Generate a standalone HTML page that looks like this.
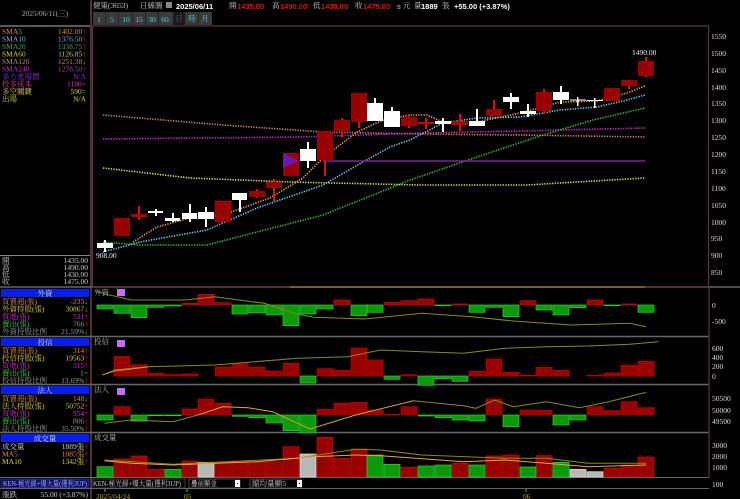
<!DOCTYPE html>
<html><head><meta charset="utf-8"><style>
body{margin:0;background:#000;width:740px;height:499px;overflow:hidden}
svg{display:block}
text{font-family:"Liberation Serif","Noto Serif CJK SC","Noto Sans CJK TC",serif;font-size:7.5px}
.s{font-family:"Liberation Sans","Noto Sans CJK TC",sans-serif}
</style></head><body>
<svg width="740" height="499" viewBox="0 0 740 499" xmlns="http://www.w3.org/2000/svg">
<rect width="740" height="499" fill="#000"/>
<rect x="90" y="0" width="2" height="499" fill="#4a3038"/>
<line x1="0" y1="26" x2="90" y2="26" stroke="#777" stroke-width="1.5"/>
<line x1="0" y1="255.5" x2="90" y2="255.5" stroke="#888"/>
<line x1="0" y1="287" x2="740" y2="287" stroke="#666" stroke-width="1.5"/>
<line x1="0" y1="336.5" x2="709" y2="336.5" stroke="#666" stroke-width="1.5"/>
<line x1="0" y1="384.5" x2="709" y2="384.5" stroke="#666" stroke-width="1.5"/>
<line x1="0" y1="432.5" x2="709" y2="432.5" stroke="#666" stroke-width="1.5"/>
<line x1="0" y1="477.5" x2="709" y2="477.5" stroke="#666" stroke-width="1"/>
<line x1="0" y1="488.5" x2="709" y2="488.5" stroke="#666" stroke-width="1"/>
<text x="45" y="16" fill="#aaa" text-anchor="middle">2025/06/11(三)</text>
<g text-anchor="start">
<text x="2" y="34" fill="#e08a3a">SMA5</text><text x="86" y="34" fill="#e08a3a" text-anchor="end">1402.00<tspan fill="#f22">↑</tspan></text>
<text x="2" y="41.5" fill="#6fb8e0">SMA10</text><text x="86" y="41.5" fill="#6fb8e0" text-anchor="end">1376.50<tspan fill="#f22">↑</tspan></text>
<text x="2" y="49" fill="#3aa83a">SMA20</text><text x="86" y="49" fill="#3aa83a" text-anchor="end">1338.75<tspan fill="#f22">↑</tspan></text>
<text x="2" y="56.5" fill="#d8d030">SMA60</text><text x="86" y="56.5" fill="#d8d030" text-anchor="end">1126.85<tspan fill="#f22">↑</tspan></text>
<text x="2" y="64" fill="#c08a60">SMA120</text><text x="86" y="64" fill="#c08a60" text-anchor="end">1251.38<tspan fill="#2d2">↓</tspan></text>
<text x="2" y="71.5" fill="#c030c0">SMA240</text><text x="86" y="71.5" fill="#c030c0" text-anchor="end">1278.50<tspan fill="#f22">↑</tspan></text>
<text x="2" y="79" fill="#8030d0">多方進場價</text><text x="86" y="79" fill="#8030d0" text-anchor="end">N/A</text>
<text x="2" y="86.5" fill="#d040a0">投多成本</text><text x="86" y="86.5" fill="#d040a0" text-anchor="end">1180=</text>
<text x="2" y="94" fill="#d8d030">多空關鍵</text><text x="86" y="94" fill="#d8d030" text-anchor="end">590=</text>
<text x="2" y="101.5" fill="#d8d030">出場</text><text x="86" y="101.5" fill="#d8d030" text-anchor="end">N/A</text>
</g>
<g fill="#ccc">
<text x="2" y="263">開</text><text x="88" y="263" text-anchor="end">1435.00</text>
<text x="2" y="270">高</text><text x="88" y="270" text-anchor="end">1490.00</text>
<text x="2" y="277">低</text><text x="88" y="277" text-anchor="end">1430.00</text>
<text x="2" y="284">收</text><text x="88" y="284" text-anchor="end">1475.00</text>
</g>
<g>
<rect x="1" y="289" width="88" height="8" fill="#0a1ee8"/><text x="45" y="296" fill="#ddd" text-anchor="middle">外資</text>
<rect x="1" y="338" width="88" height="8" fill="#0a1ee8"/><text x="45" y="345" fill="#ddd" text-anchor="middle">投信</text>
<rect x="1" y="386" width="88" height="8" fill="#0a1ee8"/><text x="45" y="393" fill="#ddd" text-anchor="middle">法人</text>
<rect x="1" y="434" width="88" height="8" fill="#0a1ee8"/><text x="45" y="441" fill="#ddd" text-anchor="middle">成交量</text>
</g>
<g>
<text x="2" y="304" fill="#e08a3a">買賣超(張)</text><text x="88" y="304" fill="#e08a3a" text-anchor="end">-235<tspan fill="#2d2">↓</tspan></text>
<text x="2" y="311.5" fill="#d8d030">外資持股(張)</text><text x="88" y="311.5" fill="#d8d030" text-anchor="end">30867<tspan fill="#2d2">↓</tspan></text>
<text x="2" y="319" fill="#d030d0">買進(張)</text><text x="88" y="319" fill="#d030d0" text-anchor="end">531<tspan fill="#f22">↑</tspan></text>
<text x="2" y="326.5" fill="#3ad03a">賣出(張)</text><text x="88" y="326.5" fill="#3ad03a" text-anchor="end">766<tspan fill="#f22">↑</tspan></text>
<text x="2" y="334" fill="#999">外資持股比例</text><text x="88" y="334" fill="#999" text-anchor="end">21.59%<tspan fill="#2d2">↓</tspan></text>
<text x="2" y="353" fill="#e08a3a">買賣超(張)</text><text x="88" y="353" fill="#e08a3a" text-anchor="end">314<tspan fill="#f22">↑</tspan></text>
<text x="2" y="360.5" fill="#d8d030">投信持股(張)</text><text x="88" y="360.5" fill="#d8d030" text-anchor="end">19563<tspan fill="#f22">↑</tspan></text>
<text x="2" y="368" fill="#d030d0">買進(張)</text><text x="88" y="368" fill="#d030d0" text-anchor="end">315<tspan fill="#f22">↑</tspan></text>
<text x="2" y="375.5" fill="#3ad03a">賣出(張)</text><text x="88" y="375.5" fill="#3ad03a" text-anchor="end">1=</text>
<text x="2" y="383" fill="#999">投信持股比例</text><text x="88" y="383" fill="#999" text-anchor="end">13.69%<tspan fill="#f22">↑</tspan></text>
<text x="2" y="401" fill="#e08a3a">買賣超(張)</text><text x="88" y="401" fill="#e08a3a" text-anchor="end">148<tspan fill="#2d2">↓</tspan></text>
<text x="2" y="408.5" fill="#d8d030">法人持股(張)</text><text x="88" y="408.5" fill="#d8d030" text-anchor="end">50752<tspan fill="#f22">↑</tspan></text>
<text x="2" y="416" fill="#d030d0">買進(張)</text><text x="88" y="416" fill="#d030d0" text-anchor="end">954<tspan fill="#f22">↑</tspan></text>
<text x="2" y="423.5" fill="#3ad03a">賣出(張)</text><text x="88" y="423.5" fill="#3ad03a" text-anchor="end">806<tspan fill="#f22">↑</tspan></text>
<text x="2" y="431" fill="#999">法人持股比例</text><text x="88" y="431" fill="#999" text-anchor="end">35.50%<tspan fill="#f22">↑</tspan></text>
<text x="2" y="449" fill="#ccc">成交量</text><text x="88" y="449" fill="#ccc" text-anchor="end">1889張<tspan fill="#f22">↑</tspan></text>
<text x="2" y="456.5" fill="#e08a3a">MA5</text><text x="88" y="456.5" fill="#e08a3a" text-anchor="end">1085張<tspan fill="#f22">↑</tspan></text>
<text x="2" y="464" fill="#d8d030">MA10</text><text x="88" y="464" fill="#d8d030" text-anchor="end">1342張<tspan fill="#f22">↑</tspan></text>
</g>
<rect x="1" y="479" width="88" height="8.5" fill="#101060" stroke="#3344cc" stroke-width="0.6"/>
<text x="3" y="486" fill="#9ab0ff" font-size="7" textLength="84" lengthAdjust="spacingAndGlyphs">KEN-極光線+爆大量(獲利3UP)</text>
<text x="2" y="497" fill="#ccc">漲跌</text><text x="88" y="497" fill="#ccc" text-anchor="end">55.00 (+3.87%)</text>

<text x="93" y="8" fill="#ccc">健策(3653)</text>
<text x="140" y="8" fill="#ccc">日線圖</text>
<rect x="166" y="2" width="6" height="6" fill="#888"/>
<text x="176" y="9" fill="#fff" font-weight="bold" font-size="9" class="s">2025/06/11</text>
<text x="229" y="8" fill="#ccc">開</text><text x="237" y="9" fill="#e01010" font-weight="bold" class="s" font-size="8">1435.00</text>
<text x="272" y="8" fill="#ccc">高</text><text x="280" y="9" fill="#e01010" font-weight="bold" class="s" font-size="8">1490.00</text>
<text x="313" y="8" fill="#ccc">低</text><text x="321" y="9" fill="#e01010" font-weight="bold" class="s" font-size="8">1430.00</text>
<text x="355" y="8" fill="#ccc">收</text><text x="363" y="9" fill="#e01010" font-weight="bold" class="s" font-size="8">1475.00</text>
<text x="397" y="9" fill="#ccc" class="s" font-size="8">s</text><text x="403" y="8" fill="#ccc">元</text>
<text x="414" y="8" fill="#ccc">量</text><text x="421" y="9" fill="#fff" font-weight="bold" class="s" font-size="8">1889</text><text x="442" y="8" fill="#ccc">張</text>
<text x="454" y="9" fill="#fff" font-weight="bold" class="s" font-size="8">+55.00 (+3.87%)</text>
<g font-size="8">
<rect x="93" y="12" width="119" height="13" fill="#3a3a3a"/>
<text x="99" y="22" fill="#4fd0e0" text-anchor="middle">1</text>
<text x="112" y="22" fill="#4fd0e0" text-anchor="middle">5</text>
<text x="126" y="22" fill="#4fd0e0" text-anchor="middle">10</text>
<text x="139" y="22" fill="#4fd0e0" text-anchor="middle">15</text>
<text x="152" y="22" fill="#4fd0e0" text-anchor="middle">30</text>
<text x="165" y="22" fill="#4fd0e0" text-anchor="middle">60</text>
<rect x="173" y="12" width="12" height="13" fill="#1a1a1a"/>
<text x="179" y="21" fill="#666" text-anchor="middle" font-size="6">日</text>
<text x="192" y="21" fill="#4fd0e0" text-anchor="middle" font-size="6">時</text>
<text x="205" y="21" fill="#4fd0e0" text-anchor="middle" font-size="6">月</text>
<g stroke="#222" stroke-width="0.8"><line x1="105.5" y1="12" x2="105.5" y2="25"/><line x1="118.5" y1="12" x2="118.5" y2="25"/><line x1="132.5" y1="12" x2="132.5" y2="25"/><line x1="145.5" y1="12" x2="145.5" y2="25"/><line x1="158.5" y1="12" x2="158.5" y2="25"/><line x1="198.5" y1="12" x2="198.5" y2="25"/></g>
</g>
<rect x="92.5" y="26" width="616" height="261" fill="none" stroke="#5a3545" stroke-width="1.2"/>
<line x1="709" y1="287" x2="709" y2="478" stroke="#5a3545" stroke-width="1.2"/>
<g fill="#ddd" font-size="7.5">
<text x="711" y="39">1550</text><text x="711" y="56">1500</text><text x="711" y="73">1450</text><text x="711" y="90">1400</text><text x="711" y="106">1350</text><text x="711" y="123">1300</text><text x="711" y="140">1250</text><text x="711" y="157">1200</text><text x="711" y="174">1150</text><text x="711" y="191">1100</text><text x="711" y="208">1050</text><text x="711" y="225">1000</text><text x="711" y="241">950</text><text x="711" y="258">900</text><text x="711" y="275">850</text>
</g>
<g fill="none" stroke-width="1.6" stroke-dasharray="1.3 1.3">
<polyline stroke="#c08a60" points="103,115 223,125 323,132 420,134 520,135 645,137"/>
<polyline stroke="#d020d0" points="103,139 300,137 420,133 520,131 645,128"/>
<polyline stroke="#e0e020" points="103,168 190,178 290,182 420,185 527,185 577,182 645,178"/>
<polyline stroke="#30c030" points="103,242 140,245 207,245 257,232 323,215 373,195 410,180 477,157 543,135 593,120 645,108"/>
<polyline stroke="#70c8f0" points="103,252 140,242 207,230 257,208 323,185 363,162 390,147 410,140 443,123 477,118 520,117 560,110 597,107 627,100 645,95"/>
<polyline stroke="#f0a040" points="133,242 157,227 190,218 223,215 270,198 303,178 323,158 357,132 383,120 410,115 427,115 443,122 477,122 520,113 543,107 560,102 597,101 627,93 645,86"/>
</g>
<line x1="323" y1="161" x2="645" y2="161" stroke="#8020a0" stroke-width="1.5"/>
<line x1="290" y1="287" x2="645" y2="287" stroke="#8a6a30" stroke-width="1.5"/>
<g>
<g fill="#fff"><rect x="104" y="240" width="2" height="12"/><rect x="97" y="243" width="16" height="5"/></g>
<rect x="114" y="218" width="16" height="18" fill="#990000"/>
<rect x="138" y="206" width="2" height="14" fill="#e01010"/><rect x="131" y="214" width="16" height="3" fill="#aa0000"/>
<g fill="#fff">
<rect x="155" y="209" width="2" height="7"/><rect x="148" y="211" width="15" height="2"/>
<rect x="172" y="213" width="2" height="9"/><rect x="165" y="218" width="15" height="3"/>
<rect x="189" y="204" width="2" height="18"/><rect x="182" y="213" width="15" height="6"/>
<rect x="205" y="207" width="2" height="20"/><rect x="198" y="212" width="16" height="7"/>
</g>
<rect x="215" y="201" width="16" height="21" fill="#990000" stroke="#c00000" stroke-width="0.5"/>
<g fill="#fff"><rect x="239" y="193" width="2" height="19"/><rect x="232" y="193" width="15" height="7"/></g>
<rect x="256" y="189" width="2" height="9" fill="#e01010"/><rect x="249" y="191" width="16" height="6" fill="#990000"/>
<rect x="273" y="179" width="2" height="22" fill="#e01010"/><rect x="266" y="182" width="16" height="6" fill="#990000"/>
<rect x="283" y="153" width="16" height="23" fill="#990000"/>
<polygon points="283,153 283,168 299,161" fill="#6a18b0"/>
<g fill="#fff"><rect x="307" y="142" width="2" height="26"/><rect x="300" y="149" width="16" height="12"/></g>
<rect x="324" y="131" width="2" height="45" fill="#e01010"/><rect x="317" y="131" width="16" height="29" fill="#990000"/>
<rect x="341" y="118" width="2" height="19" fill="#e01010"/><rect x="334" y="120" width="16" height="11" fill="#990000"/>
<rect x="358" y="93" width="2" height="35" fill="#e01010"/><rect x="351" y="93" width="16" height="29" fill="#990000"/>
<g fill="#fff">
<rect x="374" y="98" width="2" height="23"/><rect x="367" y="103" width="16" height="18"/>
<rect x="391" y="107" width="2" height="20"/><rect x="384" y="111" width="16" height="16"/>
</g>
<rect x="408" y="114" width="2" height="14" fill="#e01010"/><rect x="401" y="117" width="16" height="9" fill="#990000"/>
<rect x="425" y="118" width="2" height="11" fill="#e01010"/><rect x="418" y="122" width="16" height="2" fill="#cc0000"/>
<g fill="#fff"><rect x="442" y="118" width="2" height="14"/><rect x="435" y="121" width="16" height="3"/></g>
<rect x="459" y="114" width="2" height="17" fill="#e01010"/><rect x="452" y="121" width="16" height="4" fill="#aa0000"/>
<g fill="#fff"><rect x="476" y="109" width="2" height="17"/><rect x="469" y="121" width="16" height="5"/></g>
<rect x="493" y="100" width="2" height="16" fill="#e01010"/><rect x="486" y="109" width="16" height="7" fill="#990000"/>
<g fill="#fff">
<rect x="510" y="93" width="2" height="16"/><rect x="503" y="97" width="16" height="5"/>
<rect x="527" y="104" width="2" height="13"/><rect x="520" y="111" width="16" height="3"/>
</g>
<rect x="543" y="89" width="2" height="25" fill="#e01010"/><rect x="536" y="92" width="16" height="19" fill="#990000"/>
<g fill="#fff">
<rect x="560" y="86" width="2" height="18"/><rect x="553" y="92" width="16" height="8"/>
<rect x="577" y="97" width="1.5" height="9"/><rect x="570" y="99.5" width="16" height="1"/>
<rect x="594" y="98" width="1.5" height="10"/><rect x="587" y="100" width="16" height="1"/>
</g>
<rect x="604" y="88" width="16" height="13" fill="#990000"/>
<rect x="628" y="80" width="2" height="9" fill="#e01010"/><rect x="621" y="80" width="16" height="6" fill="#990000"/>
<rect x="645" y="57" width="2" height="20" fill="#e01010"/><rect x="638" y="61" width="16" height="15" fill="#990000"/>
</g>
<text x="632" y="55" fill="#eee" font-size="8">1490.00</text>
<text x="96" y="258" fill="#eee" font-size="8">908.00</text>
<g fill="#bbb" font-size="6.5">
<text x="94" y="295">外資</text><text x="94" y="344">投信</text><text x="94" y="392">法人</text><text x="94" y="440">成交量</text>
</g>
<g fill="#c070f0">
<rect x="117" y="289" width="8" height="7"/><rect x="117" y="340" width="8" height="7"/><rect x="117" y="388" width="8" height="7"/>
</g>
<g fill="#ddd" font-size="7.5">
<text x="712" y="308">0</text><text x="712" y="324">-500</text>
<text x="712" y="351">600</text><text x="712" y="360">400</text><text x="712" y="369">200</text><text x="712" y="379">0</text>
<text x="712" y="401">50500</text><text x="712" y="413">50000</text><text x="712" y="424">49500</text>
<text x="712" y="448">3000</text><text x="712" y="459">2000</text><text x="712" y="470">1000</text><text x="712" y="487">100</text>
</g>
<g stroke-width="0.7">
<g fill="#0c9a0c" stroke="#30d030">
<rect x="97" y="305" width="16" height="4"/><rect x="114" y="305" width="16" height="8.3"/><rect x="131" y="305" width="16" height="12.7"/><rect x="148" y="305" width="16" height="2.3"/><rect x="165" y="305" width="16" height="1"/>
<rect x="232" y="305" width="16" height="9"/><rect x="249" y="305" width="16" height="8"/><rect x="266" y="305" width="16" height="10"/><rect x="283" y="305" width="16" height="20.7"/><rect x="300" y="305" width="16" height="9"/><rect x="317" y="305" width="16" height="4"/>
<rect x="351" y="305" width="16" height="10.7"/><rect x="367" y="305" width="16" height="7.3"/><rect x="435" y="305" width="16" height="0.7"/><rect x="469" y="305" width="16" height="7.3"/><rect x="486" y="305" width="16" height="2.3"/><rect x="503" y="305" width="16" height="11.7"/><rect x="536" y="305" width="16" height="5"/><rect x="553" y="305" width="16" height="10"/><rect x="570" y="305" width="16" height="2.7"/><rect x="604" y="305" width="16" height="0.7"/><rect x="638" y="305" width="16" height="7.3"/>
</g>
<g fill="#990000" stroke="#c01010">
<rect x="182" y="303.3" width="16" height="1.7"/><rect x="198" y="294.3" width="16" height="10.7"/><rect x="215" y="302.7" width="16" height="2.3"/><rect x="334" y="300" width="16" height="5"/><rect x="384" y="302.3" width="16" height="2.7"/><rect x="401" y="300.7" width="16" height="4.3"/><rect x="418" y="299" width="16" height="6"/><rect x="452" y="304" width="16" height="1"/><rect x="520" y="300.7" width="16" height="4.3"/><rect x="587" y="300" width="16" height="5"/><rect x="621" y="304" width="16" height="1"/>
</g>
</g>
<polyline fill="none" stroke="#8a8a20" stroke-width="1" points="96.6,291.7 106.6,294.3 131.5,300 185.4,300 214.5,296.7 264.3,303.3 297.5,314.3 314,317.3 363.9,319 422,313.3 471.7,316.7 513.2,321 571.3,325 629.4,323.3 646,326.7"/>
<g stroke-width="0.7">
<g fill="#990000" stroke="#b00">
<rect x="114" y="356.3" width="16" height="19.7"/><rect x="131" y="364.7" width="16" height="11.3"/><rect x="148" y="373.3" width="16" height="2.7"/><rect x="165" y="374.7" width="16" height="1.3"/><rect x="182" y="374" width="16" height="2"/>
<rect x="215" y="367" width="16" height="9"/><rect x="232" y="363.7" width="16" height="12.3"/><rect x="249" y="367" width="16" height="9"/><rect x="266" y="371" width="16" height="5"/><rect x="283" y="363.3" width="16" height="12.7"/>
<rect x="317" y="368.7" width="16" height="7.3"/><rect x="334" y="370.3" width="16" height="5.7"/><rect x="351" y="348" width="16" height="28"/><rect x="367" y="360" width="16" height="16"/><rect x="401" y="374.7" width="16" height="1.3"/>
<rect x="469" y="371.3" width="16" height="4.7"/><rect x="486" y="359" width="16" height="17"/><rect x="503" y="372.3" width="16" height="3.7"/><rect x="520" y="375.3" width="16" height="0.7"/><rect x="536" y="367.3" width="16" height="8.7"/><rect x="553" y="370.3" width="16" height="5.7"/><rect x="587" y="375.3" width="16" height="0.7"/><rect x="604" y="373" width="16" height="3"/><rect x="621" y="365.3" width="16" height="10.7"/><rect x="638" y="361.3" width="16" height="14.7"/>
</g>
<g fill="#0c9a0c" stroke="#30d030">
<rect x="300" y="376" width="16" height="7"/><rect x="384" y="376" width="16" height="3.3"/><rect x="418" y="376" width="16" height="9.3"/><rect x="435" y="376" width="16" height="2.7"/><rect x="452" y="376" width="16" height="5.3"/>
</g>
</g>
<polyline fill="none" stroke="#8a8a20" stroke-width="1" points="102.4,375 114.9,370 148,366.7 214.5,365 297.5,358.3 347.3,356.7 380.5,350 422,351.7 463.4,353.3 505,348.3 546.4,346.7 588,346 629.4,344.3 658.5,341.7"/>
<polyline fill="none" stroke="#e08a3a" stroke-width="0.8" points="102.4,375 114.9,371 148,367"/>
<g stroke-width="0.7">
<g fill="#990000" stroke="#b00">
<rect x="114" y="406.7" width="16" height="8.3"/><rect x="182" y="409" width="16" height="6"/><rect x="198" y="399" width="16" height="16"/><rect x="215" y="403.3" width="16" height="11.7"/>
<rect x="317" y="409.3" width="16" height="5.7"/><rect x="334" y="403.3" width="16" height="11.7"/><rect x="351" y="402.3" width="16" height="12.7"/><rect x="367" y="410" width="16" height="5"/><rect x="384" y="414.3" width="16" height="0.7"/><rect x="401" y="406.7" width="16" height="8.3"/>
<rect x="486" y="399" width="16" height="16"/><rect x="520" y="410" width="16" height="5"/><rect x="536" y="410.3" width="16" height="4.7"/><rect x="587" y="406.7" width="16" height="8.3"/><rect x="604" y="410.7" width="16" height="4.3"/><rect x="621" y="401.7" width="16" height="13.3"/><rect x="638" y="407.7" width="16" height="7.3"/>
</g>
<g fill="#0c9a0c" stroke="#30d030">
<rect x="97" y="415" width="16" height="5"/><rect x="131" y="415" width="16" height="6"/><rect x="148" y="415" width="16" height="0.7"/><rect x="165" y="415" width="16" height="0.7"/>
<rect x="232" y="415" width="16" height="1.3"/><rect x="249" y="415" width="16" height="2.7"/><rect x="266" y="415" width="16" height="8"/><rect x="283" y="415" width="16" height="15.7"/><rect x="300" y="415" width="16" height="18"/>
<rect x="418" y="415" width="16" height="1"/><rect x="435" y="415" width="16" height="2.7"/><rect x="452" y="415" width="16" height="5"/><rect x="469" y="415" width="16" height="6"/><rect x="503" y="415" width="16" height="11.7"/><rect x="553" y="415" width="16" height="10"/><rect x="570" y="415" width="16" height="5"/>
</g>
</g>
<polyline fill="none" stroke="#8a8a20" stroke-width="1" points="104.5,423.3 131.5,420 173,421.7 197.9,415 222.8,406.7 247.7,407.7 272.6,411.7 310,429 355.6,415 413.6,400.7 463.4,405.7 475.9,408.3 494.6,400 513.2,406.7 546.4,401.7 579.6,407.7 608.7,401.7 646,392.3"/>
<polyline fill="none" stroke="#e0a030" stroke-width="0.8" points="197.9,415 222.8,406.7 247.7,407.7 272.6,411.7 310,429 355.6,415 413.6,400.7"/>
<g stroke-width="0.7">
<g fill="#990000" stroke="#c01010">
<rect x="114" y="459" width="16" height="18"/><rect x="131" y="456" width="16" height="21"/><rect x="148" y="469.3" width="16" height="7.7"/><rect x="182" y="461" width="16" height="16"/><rect x="215" y="462.3" width="16" height="14.7"/><rect x="232" y="461" width="16" height="16"/><rect x="249" y="462.3" width="16" height="14.7"/><rect x="266" y="461.7" width="16" height="15.3"/><rect x="283" y="446.7" width="16" height="30.3"/>
<rect x="317" y="437.3" width="16" height="39.7"/><rect x="334" y="458.3" width="16" height="18.7"/><rect x="351" y="449" width="16" height="28"/><rect x="401" y="467.3" width="16" height="9.7"/><rect x="452" y="463.3" width="16" height="13.7"/><rect x="486" y="456" width="16" height="21"/><rect x="503" y="455" width="16" height="22"/><rect x="536" y="455.7" width="16" height="21.3"/><rect x="604" y="468.3" width="16" height="8.7"/><rect x="621" y="465" width="16" height="12"/><rect x="638" y="457" width="16" height="20"/>
</g>
<g fill="#0c9a0c" stroke="#30d030">
<rect x="97" y="466.7" width="16" height="10.3"/><rect x="165" y="469.3" width="16" height="7.7"/><rect x="367" y="455" width="16" height="22"/><rect x="384" y="464.3" width="16" height="12.7"/><rect x="418" y="466" width="16" height="11"/><rect x="435" y="465" width="16" height="12"/><rect x="469" y="465" width="16" height="12"/><rect x="520" y="467" width="16" height="10"/><rect x="553" y="462.3" width="16" height="14.7"/>
</g>
<g fill="#b8b8b8" stroke="#ddd">
<rect x="198" y="462.3" width="16" height="14.7"/><rect x="300" y="454" width="16" height="23"/><rect x="570" y="469.3" width="16" height="7.7"/><rect x="587" y="471.7" width="16" height="5.3"/>
</g>
</g>
<polyline fill="none" stroke="#8a8a20" stroke-width="1" points="104.5,460 173,464.3 297.5,458.3 355.6,449.3 380.5,450 422,455 505,458.3 546.4,458.3 588,463.3 646,463.3"/>
<polyline fill="none" stroke="#f0a040" stroke-width="1" points="104.5,460.7 131.5,463.3 173,465 256,461.7 314,456.7 355.6,455 380.5,455.7 463.4,461.7 505,460 546.4,463.3 588,466.7 646,465"/>
<rect x="92" y="479" width="93" height="9" fill="#000" stroke="#666" stroke-width="0.6"/>
<text x="93" y="486" fill="#ccc" font-size="6.5" textLength="88" lengthAdjust="spacingAndGlyphs">KEN-極光線+爆大量(獲利3UP)</text>
<rect x="189" y="479" width="51" height="9" fill="#000" stroke="#777" stroke-width="0.6"/>
<text x="191" y="486" fill="#ccc" font-size="6.5" textLength="26" lengthAdjust="spacingAndGlyphs">疊前顯並</text>
<rect x="235" y="480" width="5" height="7" fill="#fff"/><rect x="237" y="483" width="1" height="1" fill="#000"/>
<rect x="250" y="479" width="51" height="9" fill="#000" stroke="#777" stroke-width="0.6"/>
<text x="252" y="486" fill="#ccc" font-size="6.5" textLength="34" lengthAdjust="spacingAndGlyphs">縮均量顯5</text>
<rect x="297" y="480" width="5" height="7" fill="#fff"/><rect x="299" y="483" width="1" height="1" fill="#000"/>
<line x1="305" y1="488.5" x2="709" y2="488.5" stroke="#666"/>
<g fill="#b0a020" font-size="7.5">
<text x="96" y="499">2025/04/24</text><text x="184" y="499">05</text><text x="523" y="499">06</text>
</g>
<g stroke="#b0a020"><line x1="105" y1="489" x2="105" y2="492"/><line x1="187" y1="489" x2="187" y2="492"/><line x1="526" y1="489" x2="526" y2="492"/></g>
</svg>
</body></html>
